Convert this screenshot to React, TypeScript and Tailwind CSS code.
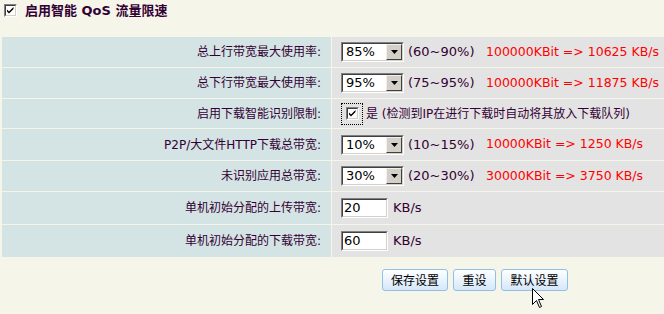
const font = { fontFamily: '"DejaVu Sans", "Noto Sans CJK SC", sans-serif' };

function Check() {
    return (
        <div className="flex h-[13px] w-[13px] items-center justify-center border border-t-[#808080] border-l-[#808080] border-b-white border-r-white">
            <div className="flex h-[11px] w-[11px] items-center justify-center border border-t-[#404040] border-l-[#404040] border-b-[#d4d0c8] border-r-[#d4d0c8] bg-white">
                <svg width="9" height="9" viewBox="0 0 9 9">
                    <path d="M1 3.5 L3 5.5 L7.5 1 L7.5 3 L3 7.5 L1 5.5 Z" fill="#000" />
                </svg>
            </div>
        </div>
    );
}

function Sel({ v }: { v: string }) {
    return (
        <div className="flex h-[20px] w-[63px] shrink-0 border border-t-[#808080] border-l-[#808080] border-b-white border-r-white">
            <div className="flex flex-1 border border-t-[#404040] border-l-[#404040] border-b-[#d4d0c8] border-r-[#d4d0c8] bg-white">
                <span className="flex-1 pl-[3px] text-[13px] leading-[16px] text-black">{v}</span>
                <div className="flex w-[16px] items-center justify-center border border-t-[#f0f0f0] border-l-[#f0f0f0] border-b-[#404040] border-r-[#404040] bg-[#d4d0c8]">
                    <svg width="7" height="4" viewBox="0 0 7 4">
                        <path d="M0 0 H7 L3.5 4 Z" fill="#000" />
                    </svg>
                </div>
            </div>
        </div>
    );
}

function Txt({ v }: { v: string }) {
    return (
        <div className="flex h-[20px] w-[47px] shrink-0 border border-t-[#808080] border-l-[#808080] border-b-white border-r-white">
            <div className="flex-1 border border-t-[#404040] border-l-[#404040] border-b-[#d4d0c8] border-r-[#d4d0c8] bg-white pl-[1px] text-[13px] leading-[16px] text-black">
                {v}
            </div>
        </div>
    );
}

function SelRow({ v, range, calc }: { v: string; range: string; calc: string }) {
    return (
        <div className="flex items-center whitespace-nowrap text-[13px]">
            <Sel v={v} />
            <span className="ml-[4px] w-[78px] shrink-0">{range}</span>
            <span className="shrink-0 text-[12.5px] text-[#ff0000]">{calc}</span>
        </div>
    );
}

const rows = [
    { label: "总上行带宽最大使用率:", h: "h-[30px]", body: <SelRow v="85%" range="(60~90%)" calc="100000KBit => 10625 KB/s" /> },
    { label: "总下行带宽最大使用率:", h: "h-[30px]", body: <SelRow v="95%" range="(75~95%)" calc="100000KBit => 11875 KB/s" /> },
    {
        label: "启用下载智能识别限制:",
        h: "h-[29px]",
        body: (
            <div className="flex items-center whitespace-nowrap">
                <div className="flex h-[22px] w-[22px] items-center justify-center border border-dotted border-black">
                    <Check />
                </div>
                <span className="ml-[3px]">是 (检测到IP在进行下载时自动将其放入下载队列)</span>
            </div>
        ),
    },
    { label: "P2P/大文件HTTP下载总带宽:", h: "h-[31px]", body: <SelRow v="10%" range="(10~15%)" calc="10000KBit => 1250 KB/s" /> },
    { label: "未识别应用总带宽:", h: "h-[30px]", body: <SelRow v="30%" range="(20~30%)" calc="30000KBit => 3750 KB/s" /> },
    {
        label: "单机初始分配的上传带宽:",
        h: "h-[32px]",
        body: (
            <div className="flex items-center">
                <Txt v="20" />
                <span className="ml-[5px] text-[13px]">KB/s</span>
            </div>
        ),
    },
    {
        label: "单机初始分配的下载带宽:",
        h: "h-[32px]",
        body: (
            <div className="flex items-center">
                <Txt v="60" />
                <span className="ml-[5px] text-[13px]">KB/s</span>
            </div>
        ),
    },
];

export default function App() {
    return (
        <div className="relative h-[314px] w-[664px] overflow-hidden bg-[#f5f5ea] text-[12px] text-[#330033]" style={font}>
            {/* 标题 */}
            <div className="flex h-[37px] items-start pl-[4px] pt-[4px]">
                <Check />
                <span className="ml-[8px] text-[13px] font-bold leading-[13px]">启用智能 QoS 流量限速</span>
            </div>

            {/* 表格 */}
            <div className="ml-[2px] flex flex-col gap-px">
                {rows.map((r, i) => (
                    <div key={i} className={`flex gap-px ${r.h}`}>
                        <div className="flex w-[329px] shrink-0 items-center justify-end whitespace-nowrap bg-[#d4e3e3] pr-[10px]">{r.label}</div>
                        <div className="flex min-w-0 flex-1 items-center overflow-hidden bg-[#e3e3e3] pl-[9px]">{r.body}</div>
                    </div>
                ))}
            </div>

            {/* 按钮 */}
            <div className="mt-[12px] flex gap-[5px] pl-[382px]" style={{ fontFamily: '"Noto Sans CJK SC", sans-serif' }}>
                <button className="h-[22px] w-[66px] rounded-[3px] border border-[#8fc1e6] bg-gradient-to-b from-white to-[#d5e7f9] text-[12px] text-black">保存设置</button>
                <button className="h-[22px] w-[43px] rounded-[3px] border border-[#8fc1e6] bg-gradient-to-b from-white to-[#d5e7f9] text-[12px] text-black">重设</button>
                <button className="h-[22px] w-[67px] rounded-[3px] border border-[#8fc1e6] bg-gradient-to-b from-white to-[#d5e7f9] text-[12px] text-black">默认设置</button>
            </div>

            {/* 鼠标指针 */}
            <svg className="absolute left-[532px] top-[288px]" width="13" height="21" viewBox="0 0 13 21">
                <path d="M0.5 0.5 V16.5 L4.5 12.5 L7.5 19.5 L9.5 18.5 L6.5 11.5 H11.5 Z" fill="#fff" stroke="#000" strokeWidth="1" />
            </svg>
        </div>
    );
}
